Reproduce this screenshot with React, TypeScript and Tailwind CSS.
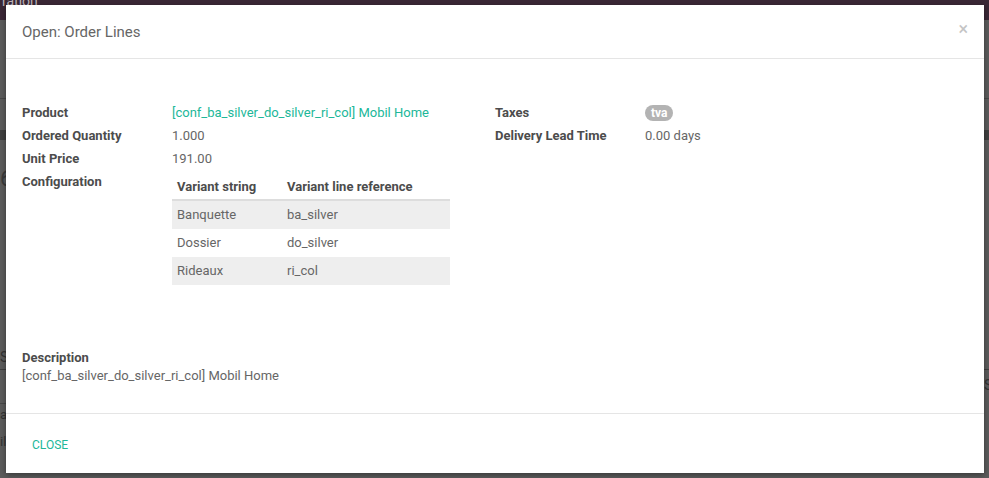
import React from "react";

const font = { fontFamily: "Roboto, 'Noto Sans', sans-serif" };

function Row({ label, children }: { label: string; children: React.ReactNode }) {
  return (
    <div className="flex items-center h-[23px]">
      <div className="w-[150px] shrink-0 font-bold text-[#4c4c4c]">{label}</div>
      <div className="text-[#666666]">{children}</div>
    </div>
  );
}

export default function App() {
  const rows = [
    ["Banquette", "ba_silver"],
    ["Dossier", "do_silver"],
    ["Rideaux", "ri_col"],
  ];
  return (
    <div className="relative w-[989px] h-[478px] overflow-hidden bg-[#5c5c5c] text-[13px]" style={font}>
      {/* backdrop page */}
      <div className="absolute left-0 top-0 w-full h-[20px] bg-[#3a2836]" />
      <div className="absolute left-[2px] top-[-9px] text-[14px] text-[#bdb3ba]">ration</div>
      <div className="absolute left-0 top-[98px] w-[6px] h-px bg-[#484848]" />
      <div className="absolute left-0 top-[130px] w-[6px] h-[10px] bg-[#3f3f3f]" />
      <div className="absolute left-0 top-[168px] text-[22px] text-[#3a3a3a] leading-none">6</div>
      <div className="absolute left-0 top-[347px] text-[14px] text-[#333]">S</div>
      <div className="absolute left-0 top-[369px] w-[6px] h-px bg-[#3f3f3f]" />
      <div className="absolute left-[984px] top-[369px] w-[6px] h-px bg-[#3f3f3f]" />
      <div className="absolute left-[984px] top-[375px] text-[14px] text-[#333]">S</div>
      <div className="absolute left-[984px] top-[130px] w-[6px] h-[10px] bg-[#3f3f3f]" />
      <div className="absolute left-[984px] top-[98px] w-[6px] h-px bg-[#484848]" />
      <div className="absolute left-0 top-[403px] w-[6px] h-px bg-[#484848]" />
      <div className="absolute left-0 top-[405px] text-[13px] text-[#333]">a</div>
      <div className="absolute left-0 top-[432px] text-[13px] text-[#333]">il</div>

      {/* modal */}
      <div className="absolute left-[6px] top-[5px] w-[978px] h-[468px] bg-white flex flex-col shadow-[0_2px_6px_rgba(0,0,0,0.4)]">
        <div className="h-[54px] shrink-0 border-b border-[#e5e5e5] flex items-center justify-between pl-[16px] pr-[16px]">
          <div className="text-[15px] text-[#666666] pt-[1px]">Open: Order Lines</div>
          <div className="text-[18px] text-[#c4c4c4] leading-none -mt-[6px]">×</div>
        </div>
        <div className="flex-1 px-[16px] pt-[42px] flex flex-col">
          <div className="flex">
            <div className="w-[473px]">
              <Row label="Product">
                <span className="text-[#21b799]">[conf_ba_silver_do_silver_ri_col] Mobil Home</span>
              </Row>
              <Row label="Ordered Quantity">1.000</Row>
              <Row label="Unit Price">191.00</Row>
              <div className="flex">
                <div className="w-[150px] shrink-0 font-bold text-[#4c4c4c] h-[23px] flex items-center">Configuration</div>
                <div className="w-[278px] mt-[1px]">
                  <div className="flex h-[30px] items-center font-bold text-[#4c4c4c] border-b-2 border-[#dddddd] pt-[3px]">
                    <div className="w-[115px] pl-[5px]">Variant string</div>
                    <div>Variant line reference</div>
                  </div>
                  {rows.map(([a, b], i) => (
                    <div key={a} className={`flex h-[28px] items-center text-[#666666] ${i % 2 === 0 ? "bg-[#eeeeee]" : "bg-white"}`}>
                      <div className="w-[115px] pl-[5px]">{a}</div>
                      <div>{b}</div>
                    </div>
                  ))}
                </div>
              </div>
            </div>
            <div className="flex-1">
              <Row label="Taxes">
                <span className="inline-flex items-center h-[16px] px-[6px] rounded-full bg-[#b3b3b3] text-white font-bold text-[12px] -mt-[2px]">tva</span>
              </Row>
              <Row label="Delivery Lead Time">0.00 days</Row>
            </div>
          </div>
          <div className="mt-[64px]">
            <div className="font-bold text-[#4c4c4c] h-[18px] flex items-center">Description</div>
            <div className="text-[#666666] h-[18px] flex items-center">[conf_ba_silver_do_silver_ri_col] Mobil Home</div>
          </div>
        </div>
        <div className="h-[60px] shrink-0 border-t border-[#e5e5e5] flex items-center pl-[26px] pt-[2px]">
          <span className="text-[#21b799] text-[12px] uppercase">Close</span>
        </div>
      </div>
    </div>
  );
}
